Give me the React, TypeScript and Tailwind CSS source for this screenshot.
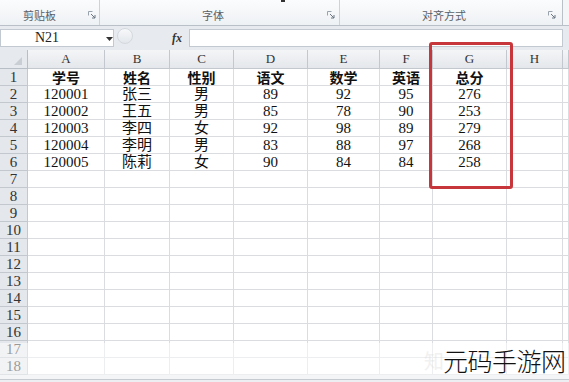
import React from 'react'

const cols = ['A', 'B', 'C', 'D', 'E', 'F', 'G', 'H', '']

const rows: string[][] = [
  ['学号', '姓名', '性别', '语文', '数学', '英语', '总分'],
  ['120001', '张三', '男', '89', '92', '95', '276'],
  ['120002', '王五', '男', '85', '78', '90', '253'],
  ['120003', '李四', '女', '92', '98', '89', '279'],
  ['120004', '李明', '男', '83', '88', '97', '268'],
  ['120005', '陈莉', '女', '90', '84', '84', '258'],
]

const serif = "font-['Liberation_Serif','Noto_Sans_CJK_SC',serif]"

function Launcher() {
  return (
    <svg width="8" height="8" viewBox="0 0 8 8" className="flex-shrink-0">
      <path d="M0.5 0.5h4M0.5 0.5v4" stroke="#9aa3ad" strokeWidth="1" fill="none" />
      <path d="M3 3l4 4M7 4v3h-3" stroke="#6b7480" strokeWidth="1" fill="none" />
    </svg>
  )
}

function Ribbon() {
  return (
    <div className="h-[26px] flex bg-gradient-to-b from-[#fbfcfd] to-[#eef1f4] border-b border-[#b9c0c8] text-[11px] leading-[14px] text-[#5a5f66] font-['Noto_Sans_CJK_SC',sans-serif] relative">
      <div className="absolute left-[281px] top-0 w-[4px] h-[2px] bg-[#333]" />
      <div className="w-[100px] flex items-end pb-[3px] border-r border-[#cdd3da]">
        <span className="pl-[23px] flex-1">剪贴板</span>
        <span className="pr-[3px] pb-[3px]"><Launcher /></span>
      </div>
      <div className="w-[240px] flex items-end pb-[3px] border-r border-[#cdd3da]">
        <span className="flex-1 pl-[102px]">字体</span>
        <span className="pr-[4px] pb-[3px]"><Launcher /></span>
      </div>
      <div className="w-[223px] flex items-end pb-[3px] border-r border-[#b9c0c8]">
        <span className="flex-1 pl-[82px]">对齐方式</span>
        <span className="pr-[6px] pb-[3px]"><Launcher /></span>
      </div>
      <div className="flex-1 bg-[#f3f5f7]" />
    </div>
  )
}

function FormulaBar() {
  return (
    <div className="h-[24px] bg-[#e7ebef] pt-[3px] pb-[3px] flex">
      <div className="w-[114px] bg-white border border-[#c3c9d0] flex items-center relative">
        <span className={`${serif} text-[14px] leading-[16px] text-[#222] pl-[34px]`}>N21</span>
        <svg width="7" height="4" viewBox="0 0 7 4" className="absolute left-[105px] top-[7px]">
          <path d="M0 0h7L3.5 4z" fill="#333" />
        </svg>
      </div>
      <div className="w-[75px] flex items-center relative">
        <div className="absolute left-[3px] top-[-1px] w-[16px] h-[16px] rounded-full border border-[#d4d9df] bg-gradient-to-b from-[#f7f8fa] to-[#e3e7eb]" />
        <span className={`${serif} absolute left-[58px] top-0 italic font-bold text-[12px] text-[#333]`}>fx</span>
      </div>
      <div className="w-[374px] bg-white border border-[#c3c9d0]" />
      <div className="flex-1" />
    </div>
  )
}

function Sheet() {
  const grid = 'grid grid-cols-[28px_77px_65px_64px_74px_72px_53px_74px_56px_1fr]'
  return (
    <div className={`${grid} bg-white`}>
      <div className="h-[19px] bg-[#e6e9ed] border-r border-b border-[#b8bec6] relative">
        <svg width="8" height="8" viewBox="0 0 8 8" className="absolute right-[5px] bottom-[3px]">
          <path d="M8 0v8H0z" fill="#c9ced4" />
        </svg>
      </div>
      {cols.map((c, i) => (
        <div
          key={'h' + i}
          className={`h-[19px] bg-gradient-to-b from-[#f4f5f7] to-[#e4e7eb] border-r border-b border-[#c3c8ce] flex items-center justify-center ${serif} text-[13px] leading-[18px] text-[#333]`}
        >
          {c}
        </div>
      ))}
      {Array.from({ length: 18 }).map((_, r) => (
        <React.Fragment key={r}>
          <div className={`h-[17px] bg-[#e4e7eb] border-r border-b border-[#c3c8ce] flex items-center justify-center ${serif} text-[15px] leading-[16px] text-[#333]`}>
            {r + 1}
          </div>
          {cols.map((_, c) => {
            const v = rows[r]?.[c] ?? ''
            return (
              <div
                key={c}
                className={`h-[17px] border-r border-b border-[#dadcdf] flex items-center justify-center text-[#111] leading-[16px] ${
                  r === 0 ? "font-['Noto_Sans_CJK_SC',sans-serif] font-bold text-[14px]" : `${serif} text-[15px]`
                }`}
              >
                {v}
              </div>
            )
          })}
        </React.Fragment>
      ))}
    </div>
  )
}

export default function App() {
  return (
    <div className="w-[569px] h-[382px] overflow-hidden bg-[#e7ebef] relative">
      <Ribbon />
      <FormulaBar />
      <Sheet />
      <div className="absolute left-0 right-0 top-[379px] h-[3px] bg-[#eceef1] border-t border-[#c6cbd1]" />
      <div className="absolute left-[429px] top-[42px] w-[84px] h-[147px] border-[3px] border-[#c7363a] rounded-[3px]" />
      <div className="absolute left-0 right-0 top-[343px] h-[36px] bg-white/50" />
      <div className="absolute left-[424px] top-[348px] text-[20px] leading-[26px] text-[#ddd] font-['Noto_Sans_CJK_SC',sans-serif] opacity-40">知</div>
      <div className="absolute left-[443px] top-[344px] text-[25px] leading-[32px] font-light text-[#111] font-['Noto_Sans_CJK_SC',sans-serif] tracking-[-0.5px]">
        元码手游网
      </div>
    </div>
  )
}
